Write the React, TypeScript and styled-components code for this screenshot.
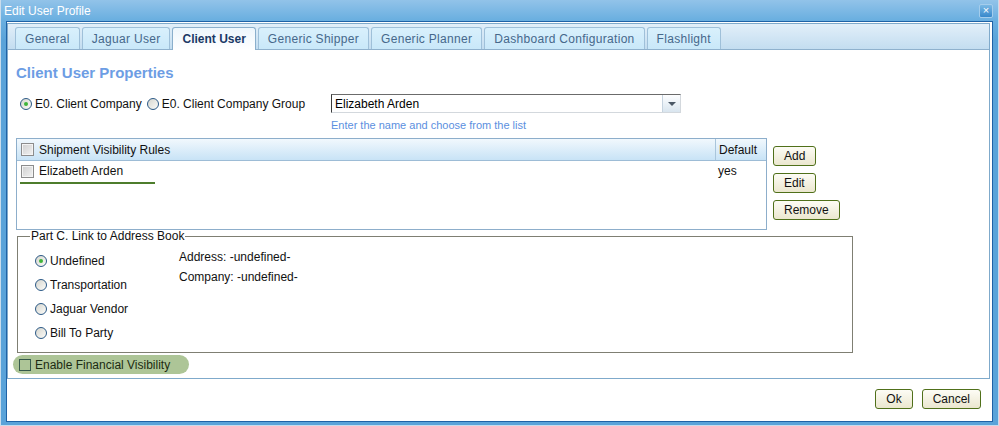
import React from 'react';
import styled, { createGlobalStyle, css } from 'styled-components';

const GlobalStyle = createGlobalStyle`
  html, body {
    margin: 0;
    padding: 0;
    background: #fff;
  }
  body {
    font-family: "Liberation Sans", Arial, sans-serif;
    font-size: 12px;
    color: #111;
  }
`;

const Window = styled.div`
  width: 999px;
  height: 426px;
  box-sizing: border-box;
  display: flex;
  flex-direction: column;
  background: linear-gradient(#92c3e9 0px, #6aafe0 20px, #5aa3d9 40px, #5aa3d9 100%);
  box-shadow: inset 1px 0 0 #c9dcec, inset -1px 0 0 #c9dcec, inset 0 -1px 0 #c9dcec;
`;

const TitleBar = styled.div`
  height: 21px;
  flex: none;
  display: flex;
  align-items: center;
  justify-content: space-between;
  padding: 0 6px 0 4px;
  color: #fff;
  font-size: 12px;
`;

const CloseButton = styled.div`
  width: 14px;
  height: 14px;
  box-sizing: border-box;
  display: flex;
  align-items: center;
  justify-content: center;
  border: 1px solid #a4cdec;
  border-radius: 2px;
  background: linear-gradient(#7ab8e4, #3888cb);
  color: #fff;
  font-size: 11px;
  line-height: 1;
`;

const Body = styled.div`
  flex: 1;
  margin: 0 6px 4px 6px;
  background: #fff;
  border: 1px solid #1f62a6;
  display: flex;
  flex-direction: column;
`;

const Panel = styled.div`
  height: 356px;
  box-sizing: border-box;
  flex: none;
  margin: 1px 2px 0 0;
  border: 1px solid #7faacb;
  display: flex;
  flex-direction: column;
`;

const TabStrip = styled.div`
  height: 26px;
  box-sizing: border-box;
  flex: none;
  display: flex;
  align-items: flex-end;
  gap: 2px;
  padding-left: 7px;
  background: linear-gradient(#e2eff9, #c3ddf0);
  border-bottom: 1px solid #8fb1cd;
`;

const Tab = styled.div<{ $active?: boolean }>`
  height: 22px;
  box-sizing: border-box;
  display: flex;
  align-items: center;
  padding: 0 9px;
  border: 1px solid #9fc0d9;
  border-bottom: none;
  border-radius: 3px 3px 0 0;
  background: linear-gradient(#d9f0fc, #c9e8f9);
  color: #46688b;
  letter-spacing: 0.3px;
  white-space: nowrap;
  ${(p) =>
    p.$active &&
    css`
      height: 23px;
      margin-bottom: -1px;
      padding: 0 9px;
      border-color: #8aafcc;
      background: linear-gradient(#edf6fc, #ffffff);
      color: #1b3966;
      font-weight: bold;
      letter-spacing: 0;
    `}
`;

const Content = styled.div`
  flex: 1;
  display: flex;
  flex-direction: column;
  align-items: flex-start;
  padding: 14px 8px 0 8px;
`;

const Heading = styled.h2`
  margin: 0;
  font-size: 15px;
  line-height: 18px;
  font-weight: bold;
  color: #6d9de4;
`;

const ChooserGrid = styled.div`
  display: grid;
  grid-template-columns: 315px 350px;
  row-gap: 5px;
  align-items: center;
  margin-top: 12px;
`;

const RadioGroup = styled.div`
  display: flex;
  align-items: center;
  padding-left: 4px;
`;

const RadioLabel = styled.label`
  display: inline-flex;
  align-items: center;
  gap: 3px;
  margin-right: 5px;
  white-space: nowrap;
`;

const Radio = styled.span<{ $checked?: boolean }>`
  position: relative;
  width: 12px;
  height: 12px;
  box-sizing: border-box;
  flex: none;
  border-radius: 50%;
  border: 1px solid #2b5986;
  background: linear-gradient(135deg, #d6d6cf, #fbfbf8);
  ${(p) =>
    p.$checked &&
    css`
      &::after {
        content: '';
        position: absolute;
        left: 3px;
        top: 3px;
        width: 4px;
        height: 4px;
        border-radius: 50%;
        background: #3fb43a;
      }
    `}
`;

const ComboBox = styled.div`
  height: 19px;
  box-sizing: border-box;
  display: flex;
  border: 1px solid #d3d8dd;
  border-top-color: #6b6b6b;
  border-left-color: #3c3c3c;
`;

const ComboInput = styled.div`
  flex: 1;
  display: flex;
  align-items: center;
  padding-left: 3px;
  color: #000;
`;

const ComboButton = styled.div`
  width: 17px;
  display: flex;
  align-items: center;
  justify-content: center;
  border-left: 1px solid #c6d3df;
  background: linear-gradient(#fdfeff, #d9e5ef);

  &::after {
    content: '';
    border-left: 4px solid transparent;
    border-right: 4px solid transparent;
    border-top: 4px solid #4b5866;
  }
`;

const Hint = styled.div`
  grid-column: 2;
  font-size: 11px;
  line-height: 14px;
  color: #5b8fe0;
`;

const RulesRow = styled.div`
  display: flex;
  gap: 6px;
  margin-top: 6px;
`;

const RulesTable = styled.div`
  width: 751px;
  height: 92px;
  box-sizing: border-box;
  border: 1px solid #8daecb;
`;

const TableHead = styled.div`
  height: 22px;
  box-sizing: border-box;
  display: flex;
  background: linear-gradient(#f1f8fd, #c8e3f6);
  border-bottom: 1px solid #9dbcd6;
`;

const TableRow = styled.div`
  height: 18px;
  display: flex;
  margin-top: 1px;
`;

const Cell = styled.div<{ $width?: number; $divider?: boolean }>`
  ${(p) => (p.$width ? `width: ${p.$width}px; flex: none;` : 'flex: 1;')}
  box-sizing: border-box;
  display: flex;
  align-items: center;
  gap: 5px;
  padding-left: ${(p) => (p.$width ? 3 : 4)}px;
  ${(p) => p.$divider && 'border-left: 1px solid #a9c5db;'}
`;

const Checkbox = styled.span`
  width: 13px;
  height: 13px;
  box-sizing: border-box;
  flex: none;
  border: 1px solid #8c8c8c;
  box-shadow: inset 0 0 0 1px #f4f4f4;
  background: linear-gradient(135deg, #cfcfcf, #f2f2f2);
`;

const Underline = styled.div`
  width: 135px;
  height: 2px;
  margin: 2px 0 0 3px;
  background: #4d7d2c;
`;

const ButtonColumn = styled.div`
  display: flex;
  flex-direction: column;
  align-items: flex-start;
  gap: 7px;
  padding-top: 8px;
`;

const Button = styled.button`
  height: 20px;
  padding: 0 10px;
  border: 1px solid #50701a;
  border-radius: 3px;
  background: linear-gradient(#fdfcf5, #ebe7cf);
  font-family: "Liberation Sans", Arial, sans-serif;
  font-size: 12px;
  color: #111;
`;

const AddressFieldset = styled.fieldset`
  width: 836px;
  box-sizing: border-box;
  margin: -1px 0 0 1px;
  padding: 6px 0 7px 12px;
  border: 1px solid #7f7f73;
  display: grid;
  grid-template-columns: 149px 1fr;
`;

const Legend = styled.legend`
  padding: 0 1px;
  line-height: 14px;
  color: #111;
`;

const RadioList = styled.div`
  display: flex;
  flex-direction: column;
  padding-left: 5px;
`;

const RadioOption = styled.label`
  height: 24px;
  display: flex;
  align-items: center;
  gap: 3px;
`;

const AddressInfo = styled.div`
  display: flex;
  flex-direction: column;
  gap: 4px;
  line-height: 16px;
`;

const FinancialPill = styled.label`
  width: 176px;
  height: 19px;
  box-sizing: border-box;
  display: flex;
  align-items: center;
  gap: 4px;
  margin: 2px 0 0 -3px;
  padding-left: 6px;
  border-radius: 10px;
  background: #adc597;
  color: #1c2b12;
`;

const PillCheckbox = styled.span`
  width: 12px;
  height: 12px;
  box-sizing: border-box;
  border: 1px solid #35594b;
`;

const Footer = styled.div`
  flex: 1;
  display: flex;
  justify-content: flex-end;
  align-items: flex-start;
  gap: 9px;
  padding: 10px 11px 0 0;
`;

const tabs = [
  'General',
  'Jaguar User',
  'Client User',
  'Generic Shipper',
  'Generic Planner',
  'Dashboard Configuration',
  'Flashlight',
];

const linkOptions = ['Undefined', 'Transportation', 'Jaguar Vendor', 'Bill To Party'];

export default function App() {
  return (
    <>
      <GlobalStyle />
      <Window>
        <TitleBar>
          <span>Edit User Profile</span>
          <CloseButton>×</CloseButton>
        </TitleBar>
        <Body>
          <Panel>
            <TabStrip>
              {tabs.map((t) => (
                <Tab key={t} $active={t === 'Client User'}>
                  {t}
                </Tab>
              ))}
            </TabStrip>
            <Content>
              <Heading>Client User Properties</Heading>

              <ChooserGrid>
                <RadioGroup>
                  <RadioLabel>
                    <Radio $checked />
                    E0. Client Company
                  </RadioLabel>
                  <RadioLabel>
                    <Radio />
                    E0. Client Company Group
                  </RadioLabel>
                </RadioGroup>
                <ComboBox>
                  <ComboInput>Elizabeth Arden</ComboInput>
                  <ComboButton />
                </ComboBox>
                <Hint>Enter the name and choose from the list</Hint>
              </ChooserGrid>

              <RulesRow>
                <RulesTable>
                  <TableHead>
                    <Cell>
                      <Checkbox />
                      Shipment Visibility Rules
                    </Cell>
                    <Cell $width={51} $divider>
                      Default
                    </Cell>
                  </TableHead>
                  <TableRow>
                    <Cell>
                      <Checkbox />
                      Elizabeth Arden
                    </Cell>
                    <Cell $width={51}>yes</Cell>
                  </TableRow>
                  <Underline />
                </RulesTable>
                <ButtonColumn>
                  <Button>Add</Button>
                  <Button>Edit</Button>
                  <Button>Remove</Button>
                </ButtonColumn>
              </RulesRow>

              <AddressFieldset>
                <Legend>Part C. Link to Address Book</Legend>
                <RadioList>
                  {linkOptions.map((o, i) => (
                    <RadioOption key={o}>
                      <Radio $checked={i === 0} />
                      {o}
                    </RadioOption>
                  ))}
                </RadioList>
                <AddressInfo>
                  <span>Address: -undefined-</span>
                  <span>Company: -undefined-</span>
                </AddressInfo>
              </AddressFieldset>

              <FinancialPill>
                <PillCheckbox />
                Enable Financial Visibility
              </FinancialPill>
            </Content>
          </Panel>
          <Footer>
            <Button>Ok</Button>
            <Button>Cancel</Button>
          </Footer>
        </Body>
      </Window>
    </>
  );
}
